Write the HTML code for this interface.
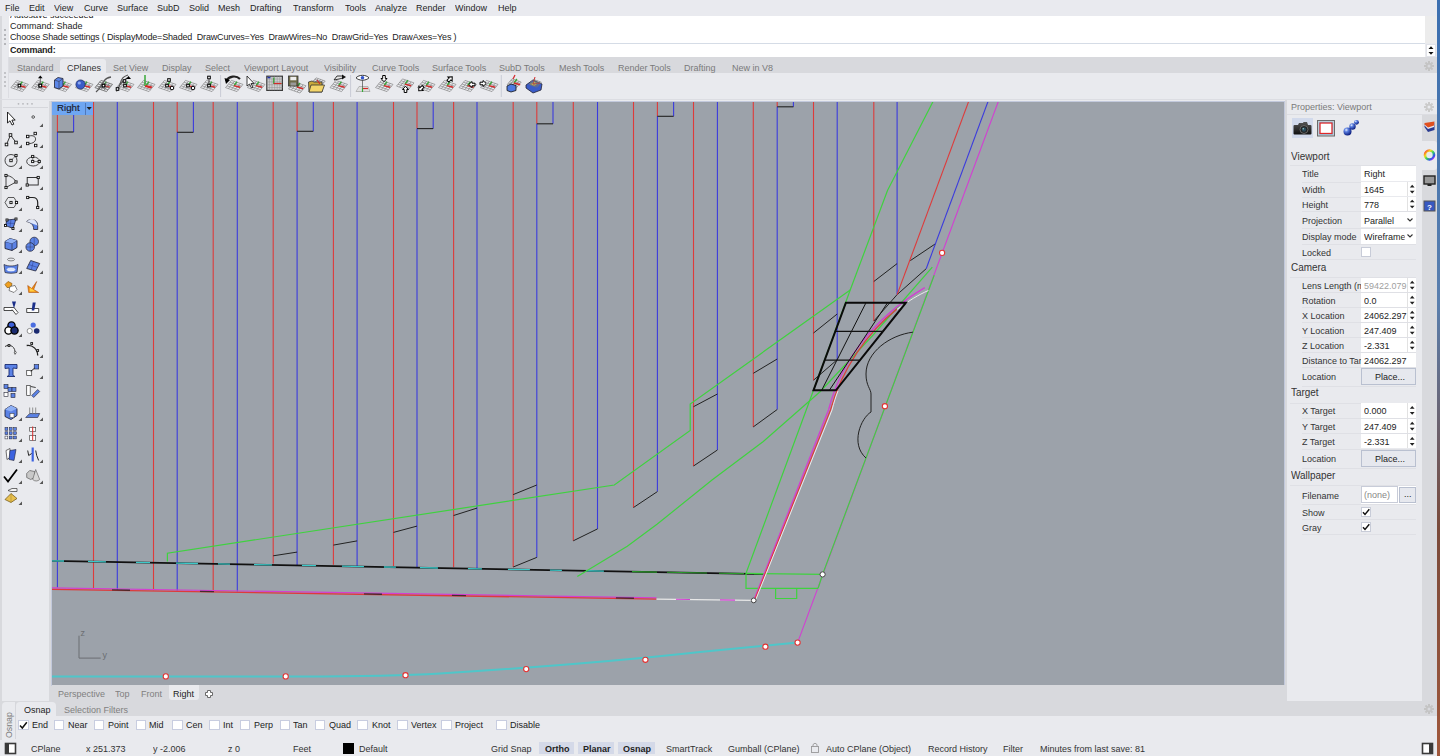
<!DOCTYPE html>
<html><head><meta charset="utf-8">
<style>
*{margin:0;padding:0;box-sizing:border-box}
html,body{width:1440px;height:756px;overflow:hidden;background:#e9eaee;font-family:"Liberation Sans",sans-serif;font-size:9px;color:#222}
.a{position:absolute}
.t{position:absolute;white-space:pre;line-height:1;font-size:9.5px;transform:scaleX(0.947);transform-origin:0 0;margin-top:-0.4px}
#menu .t{top:3.2px;color:#1e1e1e}
</style></head><body>
<!-- menu bar -->
<div id="menu" class="a" style="left:0;top:0;width:1440px;height:16px;background:#e9eaef">
<span class="t" style="left:5px">File</span>
<span class="t" style="left:29px">Edit</span>
<span class="t" style="left:54px">View</span>
<span class="t" style="left:84px">Curve</span>
<span class="t" style="left:117px">Surface</span>
<span class="t" style="left:157px">SubD</span>
<span class="t" style="left:189px">Solid</span>
<span class="t" style="left:218px">Mesh</span>
<span class="t" style="left:250px">Drafting</span>
<span class="t" style="left:293px">Transform</span>
<span class="t" style="left:345px">Tools</span>
<span class="t" style="left:375px">Analyze</span>
<span class="t" style="left:416px">Render</span>
<span class="t" style="left:455px">Window</span>
<span class="t" style="left:498px">Help</span>
</div>
<!-- command area -->
<div class="a" style="left:9px;top:16px;width:1416px;height:27px;background:#fff;overflow:hidden">
<span class="t" style="left:1px;top:-6px">Autosave succeeded</span>
<span class="t" style="left:1px;top:5.7px">Command: Shade</span>
<span class="t" style="left:1px;top:16.7px;letter-spacing:-0.18px">Choose Shade settings ( DisplayMode=Shaded  DrawCurves=Yes  DrawWires=No  DrawGrid=Yes  DrawAxes=Yes )</span>
</div>
<div class="a" style="left:9px;top:43px;width:1416px;height:1px;background:#d5dce6"></div>
<div class="a" style="left:9px;top:44px;width:1416px;height:13px;background:#fff">
<span class="t" style="left:1px;top:1px;font-weight:bold;letter-spacing:-0.2px">Command:</span>
</div>
<div class="a" style="left:1425px;top:16px;width:12px;height:27px;background:#ececec"></div>
<div class="a" style="left:1425px;top:44px;width:12px;height:13px;background:#e9eaee"></div>
<div class="a" style="left:1426px;top:44px;width:10px;height:12.5px;background:#fff;border:1px solid #e0e2e8"></div>
<svg class="a" style="left:1426px;top:44px" width="10" height="13"><path d="M2.5 5 L5 2.2 L7.5 5Z M2.5 8 L5 10.8 L7.5 8Z" fill="#111"/></svg>

<!-- toolbar tabs -->
<div class="a" style="left:9px;top:57px;width:1428px;height:15.5px;background:#d8d9dd"></div>
<div class="a" style="left:2px;top:73px;width:1435px;height:27px;background:#e9eaee"></div>
<div class="a" style="left:60px;top:59px;width:46px;height:14px;background:#e9eaee;border-radius:3px 3px 0 0"></div>
<div id="tabs" style="color:#7a7a7a">
<span class="t" style="left:17px;top:63px">Standard</span>
<span class="t" style="left:67px;top:63px;color:#333">CPlanes</span>
<span class="t" style="left:113px;top:63px">Set View</span>
<span class="t" style="left:162px;top:63px">Display</span>
<span class="t" style="left:205px;top:63px">Select</span>
<span class="t" style="left:244px;top:63px">Viewport Layout</span>
<span class="t" style="left:324px;top:63px">Visibility</span>
<span class="t" style="left:372px;top:63px">Curve Tools</span>
<span class="t" style="left:432px;top:63px">Surface Tools</span>
<span class="t" style="left:499px;top:63px">SubD Tools</span>
<span class="t" style="left:559px;top:63px">Mesh Tools</span>
<span class="t" style="left:618px;top:63px">Render Tools</span>
<span class="t" style="left:684px;top:63px">Drafting</span>
<span class="t" style="left:732px;top:63px">New in V8</span>
</div>
<!-- left toolbar -->
<div class="a" style="left:0;top:16px;width:1.5px;height:724px;background:#d8d9dd"></div>
<div class="a" style="left:2px;top:101px;width:47px;height:600px;background:#e9eaee;border-radius:4px 4px 0 0"></div>
<div class="a" style="left:49px;top:101px;width:3px;height:601px;background:#d8d9dd"></div>
<!-- viewport -->
<div class="a" style="left:51px;top:101px;width:1234px;height:585px;background:#c2c9dc"></div>
<div id="vp" class="a" style="left:52px;top:102px;width:1232px;height:583px;background:#9ca2aa;overflow:hidden"></div>
<svg class="a" style="left:0;top:0" width="1440" height="756" viewBox="0 0 1440 756"><defs><clipPath id="vc"><rect x="52" y="102" width="1232" height="583"/></clipPath></defs><g clip-path="url(#vc)" shape-rendering="auto"><path d="M93.5 101.0 L93.5 589.0" stroke="#dd3b3b" stroke-width="1.1" fill="none" />
<path d="M153.5 101.0 L153.5 590.3" stroke="#dd3b3b" stroke-width="1.1" fill="none" />
<path d="M213.2 101.0 L213.2 591.0" stroke="#dd3b3b" stroke-width="1.1" fill="none" />
<path d="M273.2 101.0 L273.2 563.5" stroke="#dd3b3b" stroke-width="1.1" fill="none" />
<path d="M333.4 101.0 L333.4 564.8" stroke="#dd3b3b" stroke-width="1.1" fill="none" />
<path d="M393.5 101.0 L393.5 566.0" stroke="#dd3b3b" stroke-width="1.1" fill="none" />
<path d="M453.6 101.0 L453.6 567.3" stroke="#dd3b3b" stroke-width="1.1" fill="none" />
<path d="M513.2 101.0 L513.2 567.0" stroke="#dd3b3b" stroke-width="1.1" fill="none" />
<path d="M573.3 101.0 L573.3 540.8" stroke="#dd3b3b" stroke-width="1.1" fill="none" />
<path d="M633.5 101.0 L633.5 507.5" stroke="#dd3b3b" stroke-width="1.1" fill="none" />
<path d="M693.5 101.0 L693.5 466.0" stroke="#dd3b3b" stroke-width="1.1" fill="none" />
<path d="M753.3 101.0 L753.3 426.9" stroke="#dd3b3b" stroke-width="1.1" fill="none" />
<path d="M813.5 101.0 L813.5 380.2" stroke="#dd3b3b" stroke-width="1.1" fill="none" />
<path d="M873.8 101.0 L873.8 321.1" stroke="#dd3b3b" stroke-width="1.1" fill="none" />
<path d="M117.3 101.0 L117.3 589.7" stroke="#3b3bdd" stroke-width="1.1" fill="none" />
<path d="M237.3 101.0 L237.3 591.5" stroke="#3b3bdd" stroke-width="1.1" fill="none" />
<path d="M357.1 101.0 L357.1 566.3" stroke="#3b3bdd" stroke-width="1.1" fill="none" />
<path d="M477.0 101.0 L477.0 568.0" stroke="#3b3bdd" stroke-width="1.1" fill="none" />
<path d="M597.5 101.0 L597.5 528.9" stroke="#3b3bdd" stroke-width="1.1" fill="none" />
<path d="M717.4 101.0 L717.4 450.0" stroke="#3b3bdd" stroke-width="1.1" fill="none" />
<path d="M837.2 101.0 L837.2 359.7" stroke="#3b3bdd" stroke-width="1.1" fill="none" />
<path d="M897.1 101.0 L897.1 294.6" stroke="#3b3bdd" stroke-width="1.1" fill="none" />
<path d="M57.4 101.0 L57.4 132.0" stroke="#dd3b3b" stroke-width="1.1" fill="none" />
<path d="M73.6 101.0 L73.6 132.0" stroke="#3b3bdd" stroke-width="1.1" fill="none" />
<path d="M57.4 132.0 L57.4 587.6" stroke="#3b3bdd" stroke-width="1.1" fill="none" />
<path d="M57.4 132.0 L73.6 132.0" stroke="#222" stroke-width="1.1" fill="none" />
<path d="M177.2 101.0 L177.2 132.3" stroke="#dd3b3b" stroke-width="1.1" fill="none" />
<path d="M193.4 101.0 L193.4 132.3" stroke="#3b3bdd" stroke-width="1.1" fill="none" />
<path d="M177.2 132.3 L177.2 590.6" stroke="#3b3bdd" stroke-width="1.1" fill="none" />
<path d="M177.2 132.3 L193.4 132.3" stroke="#222" stroke-width="1.1" fill="none" />
<path d="M297.1 101.0 L297.1 131.3" stroke="#dd3b3b" stroke-width="1.1" fill="none" />
<path d="M313.3 101.0 L313.3 131.3" stroke="#3b3bdd" stroke-width="1.1" fill="none" />
<path d="M297.1 131.3 L297.1 565.6" stroke="#3b3bdd" stroke-width="1.1" fill="none" />
<path d="M297.1 131.3 L313.3 131.3" stroke="#222" stroke-width="1.1" fill="none" />
<path d="M417.0 101.0 L417.0 128.6" stroke="#dd3b3b" stroke-width="1.1" fill="none" />
<path d="M433.2 101.0 L433.2 128.6" stroke="#3b3bdd" stroke-width="1.1" fill="none" />
<path d="M417.0 128.6 L417.0 567.5" stroke="#3b3bdd" stroke-width="1.1" fill="none" />
<path d="M417.0 128.6 L433.2 128.6" stroke="#222" stroke-width="1.1" fill="none" />
<path d="M536.8 101.0 L536.8 123.8" stroke="#dd3b3b" stroke-width="1.1" fill="none" />
<path d="M553.0 101.0 L553.0 123.8" stroke="#3b3bdd" stroke-width="1.1" fill="none" />
<path d="M536.8 123.8 L536.8 557.4" stroke="#3b3bdd" stroke-width="1.1" fill="none" />
<path d="M536.8 123.8 L553.0 123.8" stroke="#222" stroke-width="1.1" fill="none" />
<path d="M657.4 101.0 L657.4 116.3" stroke="#dd3b3b" stroke-width="1.1" fill="none" />
<path d="M673.6 101.0 L673.6 116.3" stroke="#3b3bdd" stroke-width="1.1" fill="none" />
<path d="M657.4 116.3 L657.4 491.6" stroke="#3b3bdd" stroke-width="1.1" fill="none" />
<path d="M657.4 116.3 L673.6 116.3" stroke="#222" stroke-width="1.1" fill="none" />
<path d="M777.2 101.0 L777.2 106.8" stroke="#dd3b3b" stroke-width="1.1" fill="none" />
<path d="M793.4 101.0 L793.4 106.8" stroke="#3b3bdd" stroke-width="1.1" fill="none" />
<path d="M777.2 106.8 L777.2 409.5" stroke="#3b3bdd" stroke-width="1.1" fill="none" />
<path d="M777.2 106.8 L793.4 106.8" stroke="#222" stroke-width="1.1" fill="none" />
<path d="M513.2 567.0 L536.8 557.4" stroke="#222" stroke-width="1" fill="none" />
<path d="M573.3 540.8 L597.5 528.9" stroke="#222" stroke-width="1" fill="none" />
<path d="M633.5 507.5 L657.4 491.6" stroke="#222" stroke-width="1" fill="none" />
<path d="M693.5 466.0 L717.4 450.0" stroke="#222" stroke-width="1" fill="none" />
<path d="M753.3 426.9 L777.2 409.5" stroke="#222" stroke-width="1" fill="none" />
<path d="M813.5 380.2 L837.2 359.7" stroke="#222" stroke-width="1" fill="none" />
<path d="M873.8 321.1 L897.1 294.6 L926.2 268.7" stroke="#222" stroke-width="1" fill="none" />
<path d="M273.2 555.8 L297.1 552.1" stroke="#222" stroke-width="1" fill="none" />
<path d="M333.4 545.1 L357.1 540.9" stroke="#222" stroke-width="1" fill="none" />
<path d="M393.5 532.4 L417.0 526.1" stroke="#222" stroke-width="1" fill="none" />
<path d="M453.6 515.5 L477.0 508.1" stroke="#222" stroke-width="1" fill="none" />
<path d="M513.2 494.6 L536.8 485.0" stroke="#222" stroke-width="1" fill="none" />
<path d="M693.5 406.7 L717.4 394.0" stroke="#222" stroke-width="1" fill="none" />
<path d="M753.3 373.3 L777.2 359.0" stroke="#222" stroke-width="1" fill="none" />
<path d="M813.5 333.0 L837.2 314.0" stroke="#222" stroke-width="1" fill="none" />
<path d="M873.8 281.5 L897.1 263.6" stroke="#222" stroke-width="1" fill="none" />
<path d="M910.2 260.7 L935.7 243.6" stroke="#222" stroke-width="1" fill="none" />
<path d="M968.8 101.0 L897.1 294.6" stroke="#dd3b3b" stroke-width="1.1" fill="none" />
<path d="M988.2 101.0 L926.2 268.7" stroke="#3b3bdd" stroke-width="1.1" fill="none" />
<path d="M998.5 101.0 L797.6 642.6" stroke="#d23fd2" stroke-width="1.1" fill="none" />
<path d="M52 560.8 L764 574.1" stroke="#111" stroke-width="1.8" fill="none"/>
<path d="M52 560.8 L632 571.6" stroke="#3cc8c8" stroke-width="1.3" fill="none" stroke-dasharray="12 24 18 30 14 26 22 20"/>
<path d="M632 571.6 L764 574.1" stroke="#2a9a2a" stroke-width="1.2" fill="none" stroke-dasharray="25 10 40 12"/>
<path d="M52 587.9 L656.5 597.8" stroke="#d23fd2" stroke-width="1.2" fill="none"/>
<path d="M52 589.3 L656.5 599.1" stroke="#dd3b3b" stroke-width="1.3" fill="none"/>
<path d="M52 589 L656.5 598.6" stroke="#222" stroke-width="1.3" fill="none" stroke-dasharray="0 60 18 70 14 90" opacity="0.8"/>
<path d="M656.5 599.1 L753.7 600.4" stroke="#e8e8e8" stroke-width="1.2" fill="none"/>
<path d="M676 599.3 L690 599.5 M720 599.9 L735 600.1" stroke="#d23fd2" stroke-width="1.1" fill="none"/>
<path d="M167.4 561.4 L167.4 553.2 L614.3 485.0 L690.2 430.5 L690.2 404.0 L850.2 290.0" stroke="#3fd23f" stroke-width="1.2" fill="none" />
<path d="M933.3 101.0 L887.5 190.5 L850.2 290.0 L813.5 390.3 L746.0 573.3 L746.0 588.3 L818.1 588.3" stroke="#3fd23f" stroke-width="1.2" fill="none" />
<path d="M746.0 573.4 L822.6 574.4" stroke="#3fd23f" stroke-width="1.2" fill="none" />
<path d="M775.6 588.3 L775.6 598.5 L796.7 598.5 L796.7 588.3" stroke="#3fd23f" stroke-width="1.2" fill="none" />
<path d="M934.2 275.2 L822.6 574.4 L818.1 588.3" stroke="#3fd23f" stroke-width="1.2" fill="none" />
<path d="M932.3 267.2 L873.1 335.0 L820.0 391.7 L763.3 441.5 L712.0 480.0 L657.0 524.3 L627.3 546.2 L577.3 576.5" stroke="#3fd23f" stroke-width="1.2" fill="none" />
<path d="M753.7 600.4 L828.5 410 C840 365 870 320 924.8 287.6" stroke="#d23fd2" stroke-width="1.3" fill="none"/>
<path d="M754.5 600.4 L830.5 410 C842 368 868 332 897 309" stroke="#dd3b3b" stroke-width="1.2" fill="none"/>
<path d="M755.8 599.5 L832 410 C834 402 836 396 838 391 M897 309.5 C910 300 918 295 928.4 290.5" stroke="#f4f4f4" stroke-width="0.9" fill="none"/>
<path d="M845.9 302.7 L905.9 302.7 L835.9 390.3 L813.5 390.3 Z" stroke="#0a0a0a" stroke-width="2" fill="none" stroke-linejoin="miter"/>
<path d="M835.9 331.4 L883.2 331.4" stroke="#111" stroke-width="1.2" fill="none" />
<path d="M824.7 360.2 L859.4 360.2" stroke="#111" stroke-width="1.2" fill="none" />
<path d="M866.0 302.7 L821.7 390.3" stroke="#111" stroke-width="1" fill="none" />
<path d="M887.6 302.7 L829.3 390.3" stroke="#111" stroke-width="1" fill="none" />
<path d="M912.9 332.2 C890 335 866 352 866 374 C866 386 871 389 871 394 L871 412 C861 418 850 444 866 458" stroke="#222" stroke-width="1" fill="none"/>
<path d="M52 676.6 L300 676.6 C360 676.4 405 675.5 440 673.5 C520 668.5 600 663 700 652 L797.6 642.6" stroke="#4fc6c9" stroke-width="2" fill="none"/>
<path d="M79 635.7 L79 658.1 L100.7 658.1" stroke="#6b6e72" stroke-width="1" fill="none"/>
<text x="80.5" y="636" font-size="9" fill="#6b6e72" font-family="Liberation Sans">z</text>
<text x="102.5" y="657.5" font-size="9" fill="#6b6e72" font-family="Liberation Sans">y</text>
<circle cx="165.8" cy="676.4" r="2.6" fill="#fff" stroke="#e23232" stroke-width="1.1"/>
<circle cx="285.7" cy="676.4" r="2.6" fill="#fff" stroke="#e23232" stroke-width="1.1"/>
<circle cx="405.5" cy="675.2" r="2.6" fill="#fff" stroke="#e23232" stroke-width="1.1"/>
<circle cx="526.2" cy="669.1" r="2.6" fill="#fff" stroke="#e23232" stroke-width="1.1"/>
<circle cx="645.4" cy="659.8" r="2.6" fill="#fff" stroke="#e23232" stroke-width="1.1"/>
<circle cx="765.4" cy="646.7" r="2.6" fill="#fff" stroke="#e23232" stroke-width="1.1"/>
<circle cx="797.6" cy="642.6" r="2.6" fill="#fff" stroke="#e23232" stroke-width="1.1"/>
<circle cx="942.1" cy="252.9" r="2.6" fill="#fff" stroke="#e23232" stroke-width="1.1"/>
<circle cx="884.9" cy="406.2" r="2.6" fill="#fff" stroke="#e23232" stroke-width="1.1"/>
<circle cx="822.6" cy="574.4" r="2.6" fill="#fff" stroke="#444" stroke-width="1"/>
<circle cx="753.7" cy="600.4" r="2.4" fill="#fff" stroke="#444" stroke-width="1"/></g></svg>
<!-- viewport tabs -->
<div class="a" style="left:52px;top:685px;width:1235px;height:17px;background:#d8d9dd"></div>
<!-- right panel -->
<div class="a" style="left:1285px;top:100px;width:2px;height:602px;background:#d8d9dd"></div>
<div class="a" style="left:1287px;top:100px;width:135px;height:600px;background:#e9eaee;border-radius:4px 4px 0 0"></div>
<div class="a" style="left:1422px;top:114px;width:15px;height:588px;background:#d8d9dd"></div><div class="a" style="left:1422px;top:100px;width:15px;height:14px;background:#e9eaee;border-radius:0 4px 0 0"></div>
<!-- osnap -->
<div class="a" style="left:0;top:701px;width:1437px;height:15px;background:#d8d9dd"></div>
<div class="a" style="left:2px;top:702px;width:14px;height:38px;background:#e9eaee;border-radius:4px 0 0 0"></div>
<div class="a" style="left:16px;top:702px;width:40px;height:14px;background:#e9eaee;border-radius:4px 4px 0 0"></div>
<div class="a" style="left:1437px;top:0;width:3px;height:756px;background:linear-gradient(#3b6fb0,#5a7fae 40%,#7a4a3a 70%,#a0583c)"></div>

<svg class="a" style="left:0;top:0" width="600" height="100" viewBox="0 0 600 100"><path d="M10.90 87.60L22.40 91.60M10.90 87.60L16.90 80.40M12.40 85.80L23.90 89.80M13.77 88.60L19.77 81.40M13.90 84.00L25.40 88.00M16.65 89.60L22.65 82.40M15.40 82.20L26.90 86.20M19.52 90.60L25.52 83.40M16.90 80.40L28.40 84.40M22.40 91.60L28.40 84.40" stroke="#777" stroke-width="0.6" fill="none"/><path d="M19.4 85.6L22.299999999999997 81.6" stroke="#38a838" stroke-width="1.4"/><path d="M19.4 85.6L25.599999999999998 87.3" stroke="#d42a2a" stroke-width="1.5"/><rect x="18.099999999999998" y="84.3" width="2.6" height="2.6" fill="#fff" stroke="#000" stroke-width="1"/><path d="M31.80 87.60L43.30 91.60M31.80 87.60L37.80 80.40M33.30 85.80L44.80 89.80M34.67 88.60L40.67 81.40M34.80 84.00L46.30 88.00M37.55 89.60L43.55 82.40M36.30 82.20L47.80 86.20M40.42 90.60L46.42 83.40M37.80 80.40L49.30 84.40M43.30 91.60L49.30 84.40" stroke="#777" stroke-width="0.6" fill="none"/><path d="M40.3 85.6L43.199999999999996 81.6" stroke="#38a838" stroke-width="1.4"/><path d="M40.3 85.6L46.5 87.3" stroke="#d42a2a" stroke-width="1.5"/><rect x="39.0" y="84.3" width="2.6" height="2.6" fill="#fff" stroke="#000" stroke-width="1"/><path d="M40.3 85.6 L40.3 77" stroke="#666" stroke-width="1"/><path d="M38 78.2 L40.3 75.5 L42.6 78.2Z" fill="#000"/><rect x="39" y="84.3" width="2.6" height="2.6" fill="#fff" stroke="#000" stroke-width="1"/><path d="M54.00 87.60L65.50 91.60M54.00 87.60L60.00 80.40M55.50 85.80L67.00 89.80M56.88 88.60L62.88 81.40M57.00 84.00L68.50 88.00M59.75 89.60L65.75 82.40M58.50 82.20L70.00 86.20M62.62 90.60L68.62 83.40M60.00 80.40L71.50 84.40M65.50 91.60L71.50 84.40" stroke="#777" stroke-width="0.6" fill="none"/><path d="M62.5 85.6L65.4 81.6" stroke="#38a838" stroke-width="1.4"/><path d="M62.5 85.6L68.7 87.3" stroke="#d42a2a" stroke-width="1.5"/><path d="M54.5 80 L58 77.5 L63 78.5 L63 86 L59 89 L54.5 87.5Z" fill="#5b86e8" stroke="#223" stroke-width="0.8"/><path d="M54.5 80 L59 81.5 L63 78.5 M59 81.5 L59 89" stroke="#334" stroke-width="0.6" fill="none"/><path d="M75.50 87.60L87.00 91.60M75.50 87.60L81.50 80.40M77.00 85.80L88.50 89.80M78.38 88.60L84.38 81.40M78.50 84.00L90.00 88.00M81.25 89.60L87.25 82.40M80.00 82.20L91.50 86.20M84.12 90.60L90.12 83.40M81.50 80.40L93.00 84.40M87.00 91.60L93.00 84.40" stroke="#777" stroke-width="0.6" fill="none"/><path d="M84 85.6L86.9 81.6" stroke="#38a838" stroke-width="1.4"/><path d="M84 85.6L90.2 87.3" stroke="#d42a2a" stroke-width="1.5"/><circle cx="80.5" cy="84.5" r="4.6" fill="#3a5cc8" stroke="#1a2a60" stroke-width="0.7"/><circle cx="79.3" cy="83" r="1.6" fill="#8aa6f0"/><path d="M95.00 87.60L106.50 91.60M95.00 87.60L101.00 80.40M96.50 85.80L108.00 89.80M97.88 88.60L103.88 81.40M98.00 84.00L109.50 88.00M100.75 89.60L106.75 82.40M99.50 82.20L111.00 86.20M103.62 90.60L109.62 83.40M101.00 80.40L112.50 84.40M106.50 91.60L112.50 84.40" stroke="#777" stroke-width="0.6" fill="none"/><path d="M103.5 85.6L106.4 81.6" stroke="#38a838" stroke-width="1.4"/><path d="M103.5 85.6L109.7 87.3" stroke="#d42a2a" stroke-width="1.5"/><rect x="102.2" y="84.3" width="2.6" height="2.6" fill="#fff" stroke="#000" stroke-width="1"/><path d="M96 92 C101 88 102 84 104 81 S108 77.5 111 77" stroke="#555" stroke-width="1.3" fill="none"/><path d="M95.00 87.60L106.50 91.60M95.00 87.60L101.00 80.40M96.50 85.80L108.00 89.80M97.88 88.60L103.88 81.40M98.00 84.00L109.50 88.00M100.75 89.60L106.75 82.40M99.50 82.20L111.00 86.20M103.62 90.60L109.62 83.40M101.00 80.40L112.50 84.40M106.50 91.60L112.50 84.40" stroke="#777" stroke-width="0.6" fill="none"/><rect x="102.2" y="84.3" width="2.6" height="2.6" fill="#fff" stroke="#000" stroke-width="1"/><path d="M116.50 87.60L128.00 91.60M116.50 87.60L122.50 80.40M118.00 85.80L129.50 89.80M119.38 88.60L125.38 81.40M119.50 84.00L131.00 88.00M122.25 89.60L128.25 82.40M121.00 82.20L132.50 86.20M125.12 90.60L131.12 83.40M122.50 80.40L134.00 84.40M128.00 91.60L134.00 84.40" stroke="#777" stroke-width="0.6" fill="none"/><path d="M125 85.6L127.9 81.6" stroke="#38a838" stroke-width="1.4"/><path d="M125 85.6L131.2 87.3" stroke="#d42a2a" stroke-width="1.5"/><rect x="123.7" y="84.3" width="2.6" height="2.6" fill="#fff" stroke="#000" stroke-width="1"/><path d="M116.5 91.5 C120 87 120 82 122 79 C123 77 125 76 128 75 M120 85 C122 82 124 80 127 78" stroke="#555" stroke-width="1.1" fill="none"/><path d="M126 79 L128.5 76 L131 79Z" fill="#000"/><rect x="116.2" y="87.7" width="2.6" height="2.6" fill="#fff" stroke="#000" stroke-width="1"/><rect x="123.2" y="79.7" width="2.6" height="2.6" fill="#fff" stroke="#000" stroke-width="1"/><path d="M137.50 87.60L149.00 91.60M137.50 87.60L143.50 80.40M139.00 85.80L150.50 89.80M140.38 88.60L146.38 81.40M140.50 84.00L152.00 88.00M143.25 89.60L149.25 82.40M142.00 82.20L153.50 86.20M146.12 90.60L152.12 83.40M143.50 80.40L155.00 84.40M149.00 91.60L155.00 84.40" stroke="#777" stroke-width="0.6" fill="none"/><path d="M146 85.6L148.9 81.6" stroke="#38a838" stroke-width="1.4"/><path d="M146 85.6L152.2 87.3" stroke="#d42a2a" stroke-width="1.5"/><path d="M145 86 L145 75" stroke="#38a838" stroke-width="1.5"/><path d="M145 86 L151 88" stroke="#d42a2a" stroke-width="1.5"/><path d="M158.50 87.60L170.00 91.60M158.50 87.60L164.50 80.40M160.00 85.80L171.50 89.80M161.38 88.60L167.38 81.40M161.50 84.00L173.00 88.00M164.25 89.60L170.25 82.40M163.00 82.20L174.50 86.20M167.12 90.60L173.12 83.40M164.50 80.40L176.00 84.40M170.00 91.60L176.00 84.40" stroke="#777" stroke-width="0.6" fill="none"/><path d="M167 85.6L169.9 81.6" stroke="#38a838" stroke-width="1.4"/><path d="M167 85.6L173.2 87.3" stroke="#d42a2a" stroke-width="1.5"/><rect x="165.7" y="84.3" width="2.6" height="2.6" fill="#fff" stroke="#000" stroke-width="1"/><rect x="167.7" y="78.7" width="2.6" height="2.6" fill="#fff" stroke="#000" stroke-width="1"/><circle cx="172" cy="88" r="1.8" fill="#fff" stroke="#000" stroke-width="1"/><path d="M179.50 87.60L191.00 91.60M179.50 87.60L185.50 80.40M181.00 85.80L192.50 89.80M182.38 88.60L188.38 81.40M182.50 84.00L194.00 88.00M185.25 89.60L191.25 82.40M184.00 82.20L195.50 86.20M188.12 90.60L194.12 83.40M185.50 80.40L197.00 84.40M191.00 91.60L197.00 84.40" stroke="#777" stroke-width="0.6" fill="none"/><path d="M188 85.6L190.9 81.6" stroke="#38a838" stroke-width="1.4"/><path d="M188 85.6L194.2 87.3" stroke="#d42a2a" stroke-width="1.5"/><rect x="186.7" y="84.3" width="2.6" height="2.6" fill="#fff" stroke="#000" stroke-width="1"/><circle cx="193" cy="88" r="1.8" fill="#fff" stroke="#000" stroke-width="1"/><path d="M200.50 87.60L212.00 91.60M200.50 87.60L206.50 80.40M202.00 85.80L213.50 89.80M203.38 88.60L209.38 81.40M203.50 84.00L215.00 88.00M206.25 89.60L212.25 82.40M205.00 82.20L216.50 86.20M209.12 90.60L215.12 83.40M206.50 80.40L218.00 84.40M212.00 91.60L218.00 84.40" stroke="#777" stroke-width="0.6" fill="none"/><path d="M209 85.6L211.9 81.6" stroke="#38a838" stroke-width="1.4"/><path d="M209 85.6L215.2 87.3" stroke="#d42a2a" stroke-width="1.5"/><rect x="207.7" y="84.3" width="2.6" height="2.6" fill="#fff" stroke="#000" stroke-width="1"/><rect x="207.7" y="76.2" width="2.6" height="2.6" fill="#fff" stroke="#000" stroke-width="1"/><path d="M209 79 L209 84" stroke="#444" stroke-width="1"/><path d="M220.6 75 L220.6 97" stroke="#c9ccd6" stroke-width="1"/><path d="M225.50 87.60L237.00 91.60M225.50 87.60L231.50 80.40M227.00 85.80L238.50 89.80M228.38 88.60L234.38 81.40M228.50 84.00L240.00 88.00M231.25 89.60L237.25 82.40M230.00 82.20L241.50 86.20M234.12 90.60L240.12 83.40M231.50 80.40L243.00 84.40M237.00 91.60L243.00 84.40" stroke="#777" stroke-width="0.6" fill="none"/><path d="M234 85.6L236.9 81.6" stroke="#38a838" stroke-width="1.4"/><path d="M234 85.6L240.2 87.3" stroke="#d42a2a" stroke-width="1.5"/><path d="M226 81 C229 76 236 75 240 79" stroke="#222" stroke-width="2.2" fill="none"/><path d="M224.5 78 L226 84 L230 80Z" fill="#000"/><path d="M247.50 87.60L259.00 91.60M247.50 87.60L253.50 80.40M249.00 85.80L260.50 89.80M250.38 88.60L256.38 81.40M250.50 84.00L262.00 88.00M253.25 89.60L259.25 82.40M252.00 82.20L263.50 86.20M256.12 90.60L262.12 83.40M253.50 80.40L265.00 84.40M259.00 91.60L265.00 84.40" stroke="#777" stroke-width="0.6" fill="none"/><path d="M256 85.6L258.9 81.6" stroke="#38a838" stroke-width="1.4"/><path d="M256 85.6L262.2 87.3" stroke="#d42a2a" stroke-width="1.5"/><path d="M247 76 L247 86 L249.5 84 L251.5 88 L253 87.3 L251 83.5 L254 83.5Z" fill="#fff" stroke="#111" stroke-width="0.8"/><rect x="266.8" y="76.2" width="15.6" height="14.2" fill="#cfd0d2" stroke="#3a3a3a" stroke-width="1.2"/><path d="M269.40 76.2 L269.40 90.4 M272.00 76.2 L272.00 90.4 M274.60 76.2 L274.60 90.4 M277.20 76.2 L277.20 90.4 M279.80 76.2 L279.80 90.4 M266.8 79.04 L282.4 79.04 M266.8 81.88 L282.4 81.88 M266.8 84.72 L282.4 84.72 M266.8 87.56 L282.4 87.56 " stroke="#8f8f8f" stroke-width="0.5"/><path d="M273.8 77.5 L273.8 83.5 L281.5 83.5" stroke="#2d9d2d" stroke-width="1.2" fill="none"/><path d="M273.8 83.5 L281.5 83.5" stroke="#d42a2a" stroke-width="1.2"/><rect x="267.5" y="76.8" width="3" height="1.5" fill="#2233aa"/><path d="M288.50 89.00L300.00 93.00M288.50 89.00L294.50 81.80M290.00 87.20L301.50 91.20M291.38 90.00L297.38 82.80M291.50 85.40L303.00 89.40M294.25 91.00L300.25 83.80M293.00 83.60L304.50 87.60M297.12 92.00L303.12 84.80M294.50 81.80L306.00 85.80M300.00 93.00L306.00 85.80" stroke="#777" stroke-width="0.6" fill="none"/><path d="M297 87L299.9 83" stroke="#38a838" stroke-width="1.4"/><path d="M297 87L303.2 88.7" stroke="#d42a2a" stroke-width="1.5"/><rect x="288.5" y="76" width="9.5" height="10" fill="#6d6a48" stroke="#333" stroke-width="0.8"/><rect x="290.3" y="76.8" width="6" height="3.5" fill="#eee"/><rect x="290.5" y="82.5" width="5.5" height="3" fill="#999"/><path d="M311.20 83.60L320.40 86.80M311.20 83.60L316.00 77.84M312.40 82.16L321.60 85.36M313.50 84.40L318.30 78.64M313.60 80.72L322.80 83.92M315.80 85.20L320.60 79.44M314.80 79.28L324.00 82.48M318.10 86.00L322.90 80.24M316.00 77.84L325.20 81.04M320.40 86.80L325.20 81.04" stroke="#777" stroke-width="0.6" fill="none"/><path d="M308.5 82 L312 81 L314 82 L322 82 L322 92 L309 92Z" fill="#c9a93a" stroke="#333" stroke-width="0.8"/><path d="M309 92 L311 85 L324.5 85 L322 92Z" fill="#f3d56a" stroke="#333" stroke-width="0.8"/><path d="M317 80 L320 84" stroke="#d42a2a" stroke-width="1.2"/><path d="M330.00 87.60L341.50 91.60M330.00 87.60L336.00 80.40M331.50 85.80L343.00 89.80M332.88 88.60L338.88 81.40M333.00 84.00L344.50 88.00M335.75 89.60L341.75 82.40M334.50 82.20L346.00 86.20M338.62 90.60L344.62 83.40M336.00 80.40L347.50 84.40M341.50 91.60L347.50 84.40" stroke="#777" stroke-width="0.6" fill="none"/><path d="M338.5 85.6L341.4 81.6" stroke="#38a838" stroke-width="1.4"/><path d="M338.5 85.6L344.7 87.3" stroke="#d42a2a" stroke-width="1.5"/><path d="M334 80 L337 76 L343 76 L343 78 L339 79 Z" fill="#e8e8e8" stroke="#222" stroke-width="0.9"/><path d="M342 74.5 L346 77 L342 79.5Z" fill="#111"/><path d="M350.6 75 L350.6 97" stroke="#c9ccd6" stroke-width="1"/><path d="M356 77.8 C359 74.5 366 74.5 369 77.8 C366 81 359 81 356 77.8Z" fill="#fff" stroke="#222" stroke-width="0.9"/><circle cx="362.5" cy="77.8" r="1.8" fill="#3355cc"/><path d="M356 91.5 L359 86.5 L368 86.5 L370 91.5Z" fill="#e0e0e0" stroke="#999" stroke-width="0.6"/><path d="M362.5 80 L362.5 92" stroke="#333" stroke-width="0.6"/><path d="M362.5 88 L362.5 92" stroke="#38a838" stroke-width="1.2"/><path d="M363 88.5 L368 88.5" stroke="#d42a2a" stroke-width="1.2"/><path d="M375.50 87.60L387.00 91.60M375.50 87.60L381.50 80.40M377.00 85.80L388.50 89.80M378.38 88.60L384.38 81.40M378.50 84.00L390.00 88.00M381.25 89.60L387.25 82.40M380.00 82.20L391.50 86.20M384.12 90.60L390.12 83.40M381.50 80.40L393.00 84.40M387.00 91.60L393.00 84.40" stroke="#777" stroke-width="0.6" fill="none"/><path d="M384 85.6L386.9 81.6" stroke="#38a838" stroke-width="1.4"/><path d="M384 85.6L390.2 87.3" stroke="#d42a2a" stroke-width="1.5"/><g transform="translate(384 78.5) rotate(180)"><path d="M-3 0 L0 -3.2 L3 0 L1.3 0 L1.3 3 L-1.3 3 L-1.3 0Z" fill="#fff" stroke="#000" stroke-width="1"/></g><path d="M396.50 86.10L408.00 90.10M396.50 86.10L402.50 78.90M398.00 84.30L409.50 88.30M399.38 87.10L405.38 79.90M399.50 82.50L411.00 86.50M402.25 88.10L408.25 80.90M401.00 80.70L412.50 84.70M405.12 89.10L411.12 81.90M402.50 78.90L414.00 82.90M408.00 90.10L414.00 82.90" stroke="#777" stroke-width="0.6" fill="none"/><path d="M405 84.1L407.9 80.1" stroke="#38a838" stroke-width="1.4"/><path d="M405 84.1L411.2 85.8" stroke="#d42a2a" stroke-width="1.5"/><g transform="translate(405.5 89.5) rotate(0)"><path d="M-3 0 L0 -3.2 L3 0 L1.3 0 L1.3 3 L-1.3 3 L-1.3 0Z" fill="#fff" stroke="#000" stroke-width="1"/></g><path d="M417.50 87.60L429.00 91.60M417.50 87.60L423.50 80.40M419.00 85.80L430.50 89.80M420.38 88.60L426.38 81.40M420.50 84.00L432.00 88.00M423.25 89.60L429.25 82.40M422.00 82.20L433.50 86.20M426.12 90.60L432.12 83.40M423.50 80.40L435.00 84.40M429.00 91.60L435.00 84.40" stroke="#777" stroke-width="0.6" fill="none"/><path d="M426 85.6L428.9 81.6" stroke="#38a838" stroke-width="1.4"/><path d="M426 85.6L432.2 87.3" stroke="#d42a2a" stroke-width="1.5"/><g transform="translate(421 88.5) rotate(-135)"><path d="M-3 0 L0 -3.2 L3 0 L1.3 0 L1.3 3 L-1.3 3 L-1.3 0Z" fill="#fff" stroke="#000" stroke-width="1"/></g><path d="M438.50 87.60L450.00 91.60M438.50 87.60L444.50 80.40M440.00 85.80L451.50 89.80M441.38 88.60L447.38 81.40M441.50 84.00L453.00 88.00M444.25 89.60L450.25 82.40M443.00 82.20L454.50 86.20M447.12 90.60L453.12 83.40M444.50 80.40L456.00 84.40M450.00 91.60L456.00 84.40" stroke="#777" stroke-width="0.6" fill="none"/><path d="M447 85.6L449.9 81.6" stroke="#38a838" stroke-width="1.4"/><path d="M447 85.6L453.2 87.3" stroke="#d42a2a" stroke-width="1.5"/><g transform="translate(450 79) rotate(45)"><path d="M-3 0 L0 -3.2 L3 0 L1.3 0 L1.3 3 L-1.3 3 L-1.3 0Z" fill="#fff" stroke="#000" stroke-width="1"/></g><path d="M459.00 87.60L470.50 91.60M459.00 87.60L465.00 80.40M460.50 85.80L472.00 89.80M461.88 88.60L467.88 81.40M462.00 84.00L473.50 88.00M464.75 89.60L470.75 82.40M463.50 82.20L475.00 86.20M467.62 90.60L473.62 83.40M465.00 80.40L476.50 84.40M470.50 91.60L476.50 84.40" stroke="#777" stroke-width="0.6" fill="none"/><path d="M467.5 85.6L470.4 81.6" stroke="#38a838" stroke-width="1.4"/><path d="M467.5 85.6L473.7 87.3" stroke="#d42a2a" stroke-width="1.5"/><g transform="translate(472 84.5) rotate(-90)"><path d="M-3 0 L0 -3.2 L3 0 L1.3 0 L1.3 3 L-1.3 3 L-1.3 0Z" fill="#fff" stroke="#000" stroke-width="1"/></g><path d="M480.50 87.60L492.00 91.60M480.50 87.60L486.50 80.40M482.00 85.80L493.50 89.80M483.38 88.60L489.38 81.40M483.50 84.00L495.00 88.00M486.25 89.60L492.25 82.40M485.00 82.20L496.50 86.20M489.12 90.60L495.12 83.40M486.50 80.40L498.00 84.40M492.00 91.60L498.00 84.40" stroke="#777" stroke-width="0.6" fill="none"/><path d="M489 85.6L491.9 81.6" stroke="#38a838" stroke-width="1.4"/><path d="M489 85.6L495.2 87.3" stroke="#d42a2a" stroke-width="1.5"/><g transform="translate(483 83.5) rotate(90)"><path d="M-3 0 L0 -3.2 L3 0 L1.3 0 L1.3 3 L-1.3 3 L-1.3 0Z" fill="#fff" stroke="#000" stroke-width="1"/></g><path d="M501.3 75 L501.3 97" stroke="#c9ccd6" stroke-width="1"/><path d="M507.20 84.60L516.40 87.80M507.20 84.60L512.00 78.84M508.40 83.16L517.60 86.36M509.50 85.40L514.30 79.64M509.60 81.72L518.80 84.92M511.80 86.20L516.60 80.44M510.80 80.28L520.00 83.48M514.10 87.00L518.90 81.24M512.00 78.84L521.20 82.04M516.40 87.80L521.20 82.04" stroke="#777" stroke-width="0.6" fill="none"/><path d="M514 83L516.9 79" stroke="#38a838" stroke-width="1.4"/><path d="M514 83L520.2 84.7" stroke="#d42a2a" stroke-width="1.5"/><path d="M507 86 L511 84 L516 85.5 L516 90.5 L511 92 L507 90.5Z" fill="#4d7ae0" stroke="#111" stroke-width="0.8"/><path d="M513 79 L515 75" stroke="#d42a2a" stroke-width="1.2"/><path d="M526 85 L533 80 L542 84 L541 90 L533 93 L526 88Z" fill="#3a5cc8" stroke="#223" stroke-width="0.8"/><path d="M530 84 L534 81.5 L538 83.5 L534 86Z" fill="#f0c040" stroke="#884" stroke-width="0.5"/><path d="M533 84 L535 77 M533 84 L540 83" stroke="#d42a2a" stroke-width="1"/><path d="M529.05 84.40L537.10 87.20M529.05 84.40L533.25 79.36M530.10 83.14L538.15 85.94M531.06 85.10L535.26 80.06M531.15 81.88L539.20 84.68M533.08 85.80L537.27 80.76M532.20 80.62L540.25 83.42M535.09 86.50L539.29 81.46M533.25 79.36L541.30 82.16M537.10 87.20L541.30 82.16" stroke="#777" stroke-width="0.6" fill="none"/></svg>
<svg class="a" style="left:0;top:0" width="52" height="520" viewBox="0 0 52 520"><path d="M7.5 112.0 L7.5 123.0 L10 120.8 L12 125.0 L13.8 124.2 L11.9 120.1 L15.2 120.1Z" fill="#fff" stroke="#111" stroke-width="0.9"/><circle cx="33.2" cy="117.0" r="1.3" fill="none" stroke="#333" stroke-width="0.8"/><path d="M6.5 144.5 L10.5 135.0 L16 142.5" stroke="#222" stroke-width="0.9" fill="none"/><rect x="5.20" y="143.20" width="2.6" height="2.6" fill="#fff" stroke="#111" stroke-width="0.9"/><rect x="9.20" y="133.70" width="2.6" height="2.6" fill="#fff" stroke="#111" stroke-width="0.9"/><rect x="14.70" y="141.20" width="2.6" height="2.6" fill="#fff" stroke="#111" stroke-width="0.9"/><path d="M27.700000000000003 136.5 C37.7 132.5 38.7 144.5 27.700000000000003 143.5" stroke="#333" stroke-width="0.9" fill="none"/><rect x="26.50" y="135.30" width="2.4" height="2.4" fill="#fff" stroke="#111" stroke-width="0.9"/><rect x="26.50" y="142.30" width="2.4" height="2.4" fill="#fff" stroke="#111" stroke-width="0.9"/><rect x="34.00" y="132.30" width="2.4" height="2.4" fill="#fff" stroke="#111" stroke-width="0.9"/><rect x="34.50" y="144.30" width="2.4" height="2.4" fill="#fff" stroke="#111" stroke-width="0.9"/><circle cx="11" cy="160.5" r="6" fill="none" stroke="#333" stroke-width="0.9"/><path d="M11 160.5 L16 155.5" stroke="#444" stroke-width="0.6"/><rect x="9.80" y="159.30" width="2.4" height="2.4" fill="#fff" stroke="#111" stroke-width="0.9"/><rect x="14.90" y="154.40" width="2.2" height="2.2" fill="#fff" stroke="#111" stroke-width="0.9"/><ellipse cx="33.2" cy="161.5" rx="6.5" ry="4.5" fill="none" stroke="#333" stroke-width="0.9"/><path d="M32.7 161.5 L39.2 161.5 M32.7 161.5 L32.7 156.5" stroke="#444" stroke-width="0.6"/><rect x="31.60" y="160.40" width="2.2" height="2.2" fill="#fff" stroke="#111" stroke-width="0.9"/><rect x="31.60" y="155.40" width="2.2" height="2.2" fill="#fff" stroke="#111" stroke-width="0.9"/><rect x="38.10" y="160.40" width="2.2" height="2.2" fill="#fff" stroke="#111" stroke-width="0.9"/><path d="M6 175.5 C11 175.5 15 179.5 16 182.0 L6 187.5Z" fill="none" stroke="#333" stroke-width="0.9"/><rect x="4.90" y="174.40" width="2.2" height="2.2" fill="#fff" stroke="#111" stroke-width="0.9"/><rect x="14.90" y="180.90" width="2.2" height="2.2" fill="#fff" stroke="#111" stroke-width="0.9"/><rect x="4.90" y="186.40" width="2.2" height="2.2" fill="#fff" stroke="#111" stroke-width="0.9"/><rect x="27.200000000000003" y="177.5" width="11" height="7.5" fill="none" stroke="#222" stroke-width="0.9"/><rect x="37.10" y="176.40" width="2.2" height="2.2" fill="#fff" stroke="#111" stroke-width="0.9"/><rect x="26.10" y="183.90" width="2.2" height="2.2" fill="#fff" stroke="#111" stroke-width="0.9"/><path d="M5 202.5 L8 197.5 L14 197.5 L17 202.5 L14 207.5 L8 207.5Z" fill="none" stroke="#333" stroke-width="0.8"/><rect x="9.90" y="201.40" width="2.2" height="2.2" fill="#fff" stroke="#111" stroke-width="0.9"/><rect x="15.40" y="201.40" width="2.2" height="2.2" fill="#fff" stroke="#111" stroke-width="0.9"/><path d="M27.700000000000003 197.5 L32.7 197.5 C35.7 197.5 37.7 199.5 37.7 202.5 L37.7 207.5" stroke="#222" stroke-width="1.2" fill="none"/><rect x="26.60" y="196.40" width="2.2" height="2.2" fill="#fff" stroke="#111" stroke-width="0.9"/><rect x="36.60" y="206.40" width="2.2" height="2.2" fill="#fff" stroke="#111" stroke-width="0.9"/><path d="M7 220.0 L16 219.0 L13 228.5 L5.5 225.5Z" fill="#5b82e6" stroke="#223" stroke-width="0.8"/><path d="M11 219.5 L10 227.0 M6 223.0 L14.5 223.5" stroke="#2a3a88" stroke-width="0.5"/><rect x="6.00" y="219.00" width="2" height="2" fill="#fff" stroke="#111" stroke-width="0.9"/><rect x="15.00" y="218.00" width="2" height="2" fill="#fff" stroke="#111" stroke-width="0.9"/><rect x="12.00" y="227.50" width="2" height="2" fill="#fff" stroke="#111" stroke-width="0.9"/><rect x="4.50" y="224.50" width="2" height="2" fill="#fff" stroke="#111" stroke-width="0.9"/><path d="M26.700000000000003 221.5 C30.700000000000003 217.5 37.7 219.5 37.7 225.5 L37.7 229.5 L33.7 229.5 C33.7 223.5 29.700000000000003 222.5 26.700000000000003 221.5Z" fill="#5b82e6" stroke="#223" stroke-width="0.8"/><path d="M26.700000000000003 221.5 L29.700000000000003 219.5 C32.7 217.5 35.7 219.5 37.7 225.5" fill="#fff" stroke="none" opacity="0.8"/><path d="M5 241.5 L10 238.5 L17 240.5 L17 247.5 L12 250.5 L5 248.5Z" fill="#5b82e6" stroke="#112" stroke-width="0.8"/><path d="M5 241.5 L12 243.5 L17 240.5 M12 243.5 L12 250.5" stroke="#223" stroke-width="0.6" fill="none"/><path d="M5 241.5 L10 238.5 L17 240.5 L12 243.5Z" fill="#8fb0f5"/><circle cx="34.2" cy="241.5" r="4.3" fill="#5b82e6" stroke="#223" stroke-width="0.7"/><circle cx="30.200000000000003" cy="247.0" r="4.3" fill="#5b82e6" stroke="#223" stroke-width="0.7"/><path d="M26.200000000000003 247.0 L34.2 247.0 M30.200000000000003 243.0 L30.200000000000003 251.0 M34.2 237.5 L34.2 245.5" stroke="#334" stroke-width="0.4"/><ellipse cx="11" cy="259.5" rx="3.5" ry="1.4" fill="none" stroke="#555" stroke-width="0.7"/><path d="M4 264.5 C8 266.5 14 266.5 18 264.5 L17 272.5 C13 273.5 9 273.5 5 272.5Z" fill="#5b82e6" stroke="#223" stroke-width="0.7"/><ellipse cx="11" cy="269.5" rx="4" ry="1.5" fill="#dbe4fb" stroke="#fff" stroke-width="0.6"/><path d="M26.700000000000003 268.5 L30.700000000000003 260.5 L39.7 263.5 L35.7 271.0Z" fill="#5b82e6" stroke="#223" stroke-width="0.8"/><path d="M33.2 262.0 L31.200000000000003 270.0 M28.700000000000003 264.5 L37.7 267.5" stroke="#2a3a88" stroke-width="0.5"/><path d="M5 284.5 L8 281.5 L12 283.5 L11 287.5 L7 287.5Z" fill="#f0a020" stroke="#8a5a10" stroke-width="0.7"/><path d="M10 286.5 L15 285.5 L17 289.5 L14 292.5 L9 290.5Z" fill="#fff" stroke="#555" stroke-width="0.7"/><path d="M27.700000000000003 285.5 L28.700000000000003 292.5 L38.7 292.5 L33.7 289.5 L36.7 281.5 L31.700000000000003 288.5Z" fill="#f08a10" stroke="#a04000" stroke-width="0.5"/><path d="M29.700000000000003 287.5 L29.700000000000003 291.5 L35.7 291.5 L32.7 289.5Z" fill="#ffd040"/><path d="M4 307.5 L14 307.5 L14 310.5 L4 310.5Z" fill="#fff" stroke="#222" stroke-width="0.8"/><path d="M12 301.5 L16 301.5 L14 308.5Z" fill="#1a2f8a"/><path d="M12 309.5 L16 314.5 L18 312.5 L14 307.5" fill="#fff" stroke="#222" stroke-width="0.8"/><path d="M26.700000000000003 308.5 L38.7 308.5 L38.7 312.5 L26.700000000000003 312.5Z" fill="#fff" stroke="#222" stroke-width="0.8"/><path d="M32.7 302.5 L35.7 302.5 L34.2 310.5 L31.700000000000003 310.5Z" fill="#1a2f8a"/><circle cx="11.5" cy="325.5" r="3.6" fill="#3c5fd8" stroke="#000" stroke-width="1.4"/><circle cx="8.5" cy="330.5" r="3.6" fill="#fff" stroke="#000" stroke-width="1.4"/><circle cx="14.5" cy="330.5" r="3.6" fill="#1a2a70" stroke="#000" stroke-width="1.4"/><circle cx="33.2" cy="325.0" r="2.6" fill="#4a6de0"/><circle cx="29.700000000000003" cy="331.0" r="2.6" fill="#fff" stroke="#333" stroke-width="0.5"/><circle cx="36.7" cy="331.0" r="2.8" fill="#1a2a70"/><path d="M5 346.5 C10 343.5 16 346.5 15 354.5" stroke="#222" stroke-width="0.9" fill="none"/><rect x="8.10" y="344.60" width="1.8" height="1.8" fill="#fff" stroke="#111" stroke-width="0.9"/><circle cx="15.3" cy="352.5" r="1" fill="#fff" stroke="#222" stroke-width="0.6"/><path d="M26.700000000000003 345.5 C32.7 344.5 37.7 349.5 37.7 355.5" stroke="#222" stroke-width="1.3" fill="none"/><rect x="30.80" y="342.60" width="1.8" height="1.8" fill="#fff" stroke="#111" stroke-width="0.9"/><rect x="36.80" y="349.60" width="1.8" height="1.8" fill="#fff" stroke="#111" stroke-width="0.9"/><path d="M5 364.5 L17 364.5 L17 368.5 L13 368.0 L13 375.5 L15 376.5 L7 376.5 L9 375.5 L9 368.0 L5 368.5Z" fill="#5b82e6" stroke="#1a2a70" stroke-width="0.9"/><rect x="26.700000000000003" y="370.5" width="5" height="5" fill="#fff" stroke="#333" stroke-width="0.7"/><rect x="34.2" y="364.5" width="4.5" height="4.5" fill="#5b82e6" stroke="#223" stroke-width="0.6"/><path d="M30.700000000000003 371.5 L34.7 368.0" stroke="#111" stroke-width="0.9"/><rect x="4" y="384.5" width="4" height="4" fill="#5b82e6" stroke="#223" stroke-width="0.6"/><rect x="8" y="387.5" width="4" height="4" fill="#5b82e6" stroke="#223" stroke-width="0.6"/><rect x="4" y="392.5" width="4" height="4" fill="#fff" stroke="#223" stroke-width="0.6"/><rect x="12" y="387.5" width="4" height="4" fill="#5b82e6" stroke="#223" stroke-width="0.6"/><rect x="11" y="393.5" width="4" height="4" fill="#5b82e6" stroke="#223" stroke-width="0.6"/><rect x="26.700000000000003" y="385.5" width="3.5" height="10" fill="#fff" stroke="#333" stroke-width="0.7"/><path d="M31.700000000000003 395.5 L37.7 389.5 L39.7 391.5 L33.7 397.5Z" fill="#5b82e6" stroke="#223" stroke-width="0.6"/><path d="M30.700000000000003 386.5 L35.7 387.5" stroke="#111" stroke-width="0.8"/><path d="M5 409.5 L11 405.5 L17 408.5 L17 415.5 L11 419.5 L5 416.5Z" fill="#5b82e6" stroke="#112" stroke-width="0.8"/><path d="M5 409.5 L11 405.5 L17 408.5 L11 411.5Z" fill="#8fb0f5"/><rect x="10" y="413.5" width="4" height="4" fill="#fff" stroke="#333" stroke-width="0.5"/><path d="M25.700000000000003 417.5 L29.700000000000003 413.5 L39.7 413.5 L37.7 417.5Z" fill="#5b82e6" stroke="#223" stroke-width="0.6"/><path d="M29.700000000000003 414.5 L29.700000000000003 407.5 M32.7 414.5 L32.7 407.5 M35.7 414.5 L35.7 407.5" stroke="#777" stroke-width="0.8"/><rect x="5.0" y="427.5" width="2.8" height="2.8" fill="#5b82e6" stroke="#223" stroke-width="0.5"/><rect x="5.0" y="431.8" width="2.8" height="2.8" fill="#5b82e6" stroke="#223" stroke-width="0.5"/><rect x="5.0" y="436.1" width="2.8" height="2.8" fill="#fff" stroke="#223" stroke-width="0.5"/><rect x="9.3" y="427.5" width="2.8" height="2.8" fill="#5b82e6" stroke="#223" stroke-width="0.5"/><rect x="9.3" y="431.8" width="2.8" height="2.8" fill="#5b82e6" stroke="#223" stroke-width="0.5"/><rect x="9.3" y="436.1" width="2.8" height="2.8" fill="#5b82e6" stroke="#223" stroke-width="0.5"/><rect x="13.6" y="427.5" width="2.8" height="2.8" fill="#5b82e6" stroke="#223" stroke-width="0.5"/><rect x="13.6" y="431.8" width="2.8" height="2.8" fill="#5b82e6" stroke="#223" stroke-width="0.5"/><rect x="13.6" y="436.1" width="2.8" height="2.8" fill="#5b82e6" stroke="#223" stroke-width="0.5"/><rect x="29.700000000000003" y="427.5" width="6" height="4" fill="#fff" stroke="#333" stroke-width="0.6"/><rect x="29.700000000000003" y="435.5" width="6" height="5" fill="#fff" stroke="#333" stroke-width="0.6"/><path d="M32.7 426.5 L32.7 440.5" stroke="#d42a2a" stroke-width="1"/><path d="M6 450.5 L10 448.5 L10 457.5 L7 459.5Z" fill="#fff" stroke="#333" stroke-width="0.7"/><path d="M10 450.5 L16 449.5 L14 460.5 L9 459.5Z" fill="#3c62e0" stroke="#223" stroke-width="0.6"/><path d="M32.7 447.5 L32.7 461.5" stroke="#3c62e0" stroke-width="2.2"/><path d="M27.700000000000003 450.5 L28.700000000000003 455.5 L31.700000000000003 453.5 M35.7 450.5 L36.7 455.5 L38.7 460.5" stroke="#111" stroke-width="0.9" fill="none"/><path d="M4 476.5 L8 481.5 L17 469.5" stroke="#000" stroke-width="1.8" fill="none"/><path d="M26.700000000000003 473.5 L29.700000000000003 470.5 L34.7 471.5 L34.7 477.5 L30.700000000000003 479.5 L26.700000000000003 477.5Z" fill="#c8c8c8" stroke="#444" stroke-width="0.6"/><path d="M35.7 469.5 L39.7 479.5 C37.7 481.5 34.7 481.5 32.7 479.5Z" fill="#d8d8d8" stroke="#555" stroke-width="0.6"/><path d="M5 499.5 L11 493.5 L17 498.5 L11 502.5Z" fill="#e8c050" stroke="#6a5010" stroke-width="0.7"/><path d="M11 493.5 L11 502.5" stroke="#a08020" stroke-width="0.5"/><path d="M8 490.5 L12 488.5 L17 488.5 L17 491.5 L11 491.5Z" fill="#f4f4f4" stroke="#333" stroke-width="0.7"/><path d="M43.0 123.5 L43.0 127.0 L39.5 127.0Z" fill="#555"/><path d="M22.0 144.5 L22.0 148.0 L18.5 148.0Z" fill="#555"/><path d="M43.0 144.5 L43.0 148.0 L39.5 148.0Z" fill="#555"/><path d="M22.0 165.5 L22.0 169.0 L18.5 169.0Z" fill="#555"/><path d="M43.0 165.5 L43.0 169.0 L39.5 169.0Z" fill="#555"/><path d="M22.0 186.5 L22.0 190.0 L18.5 190.0Z" fill="#555"/><path d="M43.0 186.5 L43.0 190.0 L39.5 190.0Z" fill="#555"/><path d="M22.0 207.5 L22.0 211.0 L18.5 211.0Z" fill="#555"/><path d="M43.0 207.5 L43.0 211.0 L39.5 211.0Z" fill="#555"/><path d="M22.0 228.5 L22.0 232.0 L18.5 232.0Z" fill="#555"/><path d="M43.0 228.5 L43.0 232.0 L39.5 232.0Z" fill="#555"/><path d="M22.0 249.5 L22.0 253.0 L18.5 253.0Z" fill="#555"/><path d="M43.0 249.5 L43.0 253.0 L39.5 253.0Z" fill="#555"/><path d="M22.0 270.5 L22.0 274.0 L18.5 274.0Z" fill="#555"/><path d="M43.0 270.5 L43.0 274.0 L39.5 274.0Z" fill="#555"/><path d="M22.0 291.5 L22.0 295.0 L18.5 295.0Z" fill="#555"/><path d="M22.0 333.5 L22.0 337.0 L18.5 337.0Z" fill="#555"/><path d="M43.0 354.5 L43.0 358.0 L39.5 358.0Z" fill="#555"/><path d="M43.0 375.5 L43.0 379.0 L39.5 379.0Z" fill="#555"/><path d="M22.0 417.5 L22.0 421.0 L18.5 421.0Z" fill="#555"/><path d="M43.0 417.5 L43.0 421.0 L39.5 421.0Z" fill="#555"/><path d="M22.0 438.5 L22.0 442.0 L18.5 442.0Z" fill="#555"/><path d="M43.0 438.5 L43.0 442.0 L39.5 442.0Z" fill="#555"/><path d="M22.0 459.5 L22.0 463.0 L18.5 463.0Z" fill="#555"/><path d="M43.0 459.5 L43.0 463.0 L39.5 463.0Z" fill="#555"/><path d="M22.0 480.5 L22.0 484.0 L18.5 484.0Z" fill="#555"/><path d="M43.0 480.5 L43.0 484.0 L39.5 484.0Z" fill="#555"/><path d="M22.0 501.5 L22.0 505.0 L18.5 505.0Z" fill="#555"/><circle cx="18.5" cy="103.8" r="0.9" fill="#b5b6ba"/><circle cx="23.0" cy="103.8" r="0.9" fill="#b5b6ba"/><circle cx="27.5" cy="103.8" r="0.9" fill="#b5b6ba"/><circle cx="32.0" cy="103.8" r="0.9" fill="#b5b6ba"/><path d="M3 107.5 L48 107.5" stroke="#d6d7dc" stroke-width="1"/></svg>
<!-- toolbar grip -->
<div class="a" style="left:4px;top:71.5px;width:2px;height:2px;background:#b5b6ba;border-radius:1px"></div>
<div class="a" style="left:4px;top:76px;width:2px;height:2px;background:#b5b6ba;border-radius:1px"></div>
<div class="a" style="left:4px;top:80.5px;width:2px;height:2px;background:#b5b6ba;border-radius:1px"></div>
<div class="a" style="left:4px;top:85px;width:2px;height:2px;background:#b5b6ba;border-radius:1px"></div>
<div class="a" style="left:8px;top:57px;width:1px;height:41px;background:#dcdde2"></div>
<div class="a" style="left:4px;top:29px;width:2px;height:2px;background:#b5b6ba"></div>
<div class="a" style="left:4px;top:33.5px;width:2px;height:2px;background:#b5b6ba"></div>
<div class="a" style="left:4px;top:38px;width:2px;height:2px;background:#b5b6ba"></div>
<div class="a" style="left:4px;top:42.5px;width:2px;height:2px;background:#b5b6ba"></div>
<!-- viewport label -->
<div class="a" style="left:52px;top:102px;width:41px;height:13px;background:#6ea6f2"></div>
<span class="t" style="left:57.2px;top:104.2px;color:#1a1a2a;font-size:9px;transform:scaleX(1.08);-webkit-text-stroke:0.15px #1a1a2a">Right</span>
<div class="a" style="left:84.5px;top:103px;width:1px;height:11.5px;background:#5078b8"></div>
<svg class="a" style="left:86px;top:105px" width="7" height="7"><path d="M0.6 2 L5.8 2 L3.2 5Z" fill="#222"/></svg>
<!-- viewport tabs text -->
<div class="a" style="left:169px;top:685px;width:30px;height:15px;background:#e9eaee;border-radius:0 0 3px 3px"></div>
<span class="t" style="left:58px;top:689px;color:#808080">Perspective</span>
<span class="t" style="left:115px;top:689px;color:#808080">Top</span>
<span class="t" style="left:141px;top:689px;color:#808080">Front</span>
<span class="t" style="left:173px;top:689px;color:#222">Right</span>
<svg class="a" style="left:205px;top:690px" width="8" height="8"><path d="M2.5 0.5 H5.5 V2.5 H7.5 V5.5 H5.5 V7.5 H2.5 V5.5 H0.5 V2.5 H2.5 Z" fill="#fff" stroke="#6a6a6a" stroke-width="1"/></svg>
<!-- right panel content -->
<div id="props">
<span class="t" style="left:1291px;top:102px;color:#7a7a7a">Properties: Viewport</span>
<div class="a" style="left:1287px;top:114px;width:150px;height:1px;background:#dcdde2"></div>
<svg class="a" style="left:1423px;top:101px" width="12" height="12"><g transform="translate(6 6)" fill="#cbcbcb"><circle r="3.2"/><g id="teeth"><rect x="-1" y="-5" width="2" height="10"/><rect x="-5" y="-1" width="10" height="2"/><rect x="-1" y="-5" width="2" height="10" transform="rotate(45)"/><rect x="-5" y="-1" width="10" height="2" transform="rotate(45)"/></g><circle r="1.5" fill="#e9eaee"/></g></svg>
<div class="a" style="left:1292px;top:118px;width:21px;height:20px;background:#d2daec"></div>
<svg class="a" style="left:1292px;top:118px" width="70" height="20">
<defs><radialGradient id="bg1" cx="0.35" cy="0.3" r="0.7"><stop offset="0" stop-color="#e8f0ff"/><stop offset="0.35" stop-color="#5a7ee0"/><stop offset="1" stop-color="#0c1f80"/></radialGradient><linearGradient id="cam" x1="0" y1="0" x2="0" y2="1"><stop offset="0" stop-color="#555"/><stop offset="1" stop-color="#111"/></linearGradient></defs>
<path d="M2.5 7 L6 7 L7 5 L11 5 L11.5 4 L15 4 L16 7 L18.5 7 Q19.5 7 19.5 8 L19.5 15.5 Q19.5 16.5 18.5 16.5 L2.5 16.5 Q1.5 16.5 1.5 15.5 L1.5 8 Q1.5 7 2.5 7Z" fill="url(#cam)"/>
<circle cx="12" cy="11.5" r="4" fill="#222" stroke="#777" stroke-width="0.8"/><circle cx="12" cy="11.5" r="2.2" fill="#2a4a5a"/><circle cx="11.3" cy="10.8" r="0.8" fill="#9cc"/>
<rect x="25.5" y="2.5" width="17" height="15.5" fill="#c8ccd2" stroke="#6a6a6a" stroke-width="1"/>
<rect x="26.8" y="3.8" width="14.4" height="12.9" fill="#7fd0f4"/>
<rect x="28" y="5" width="12" height="10.5" fill="#fff" stroke="#e02828" stroke-width="1.3"/>
<circle cx="55.5" cy="13.5" r="4" fill="url(#bg1)"/>
<circle cx="60.5" cy="8.5" r="3.2" fill="url(#bg1)"/>
<circle cx="64.5" cy="4.3" r="2.4" fill="url(#bg1)"/>
</svg>
<!-- side tabs -->
<div class="a" style="left:1422px;top:141px;width:15px;height:29px;background:#e9eaee;border-radius:0 3px 3px 0"></div>
<svg class="a" style="left:1422px;top:118px" width="15" height="105">
<path d="M2.5 6 L12.5 5 L12.5 12 L6 14 L2.5 9Z" fill="#2a3a90"/><path d="M2.5 6 L12.5 5 L12 9 L6 11 L2.5 7.5Z" fill="#e8e8f0"/><path d="M2.5 5 L12.5 3.5 L12 7.5 L6 9.5 L2.5 6.5Z" fill="#e05020"/>
<circle cx="7.5" cy="37" r="4.5" fill="none" stroke="url(#cw)" stroke-width="2.6"/>
<defs><linearGradient id="cw" x1="0" y1="0" x2="1" y2="1"><stop offset="0" stop-color="#ff3030"/><stop offset="0.3" stop-color="#f0e020"/><stop offset="0.55" stop-color="#30d060"/><stop offset="0.8" stop-color="#3050f0"/><stop offset="1" stop-color="#e030e0"/></linearGradient></defs>
<rect x="2" y="58" width="11" height="8" fill="#999" stroke="#222" stroke-width="1.4"/><rect x="5.5" y="66" width="4" height="2" fill="#222"/>
<rect x="2" y="83" width="11" height="10" fill="#3858c0" stroke="#555" stroke-width="1"/><text x="7.5" y="91.5" font-size="8" fill="#fff" text-anchor="middle" font-family="Liberation Sans" font-weight="bold">?</text>
</svg>
<span class="t" style="left:1290.5px;top:151px;font-size:10.5px;color:#333">Viewport</span><div class="a" style="left:1290px;top:165.3px;width:126px;height:1px;background:#dfe0e5"></div><span class="t" style="left:1302px;top:169.8px;color:#333">Title</span><div class="a" style="left:1360.5px;top:165.8px;width:55px;height:15.199999999999989px;background:#fff"></div><span class="t" style="left:1363.5px;top:169.8px;color:#222;width:52px;overflow:hidden">Right</span><div class="a" style="left:1302px;top:181.5px;width:114px;height:1px;background:#dfe0e5"></div><span class="t" style="left:1302px;top:185.4px;color:#333">Width</span><div class="a" style="left:1360.5px;top:182.0px;width:55px;height:14.0px;background:#fff"></div><span class="t" style="left:1363.5px;top:185.4px;color:#222;width:52px;overflow:hidden">1645</span><div class="a" style="left:1407px;top:182.0px;width:1px;height:14.0px;background:#e2e2e2"></div><svg class="a" style="left:1408px;top:182.0px" width="8" height="14.0"><path d="M1.8 5.4 L4.2 2.8 L6.6 5.4Z M1.8 8.8 L4.2 11.4 L6.6 8.8Z" fill="#222"/></svg><div class="a" style="left:1302px;top:196.5px;width:114px;height:1px;background:#dfe0e5"></div><span class="t" style="left:1302px;top:200.3px;color:#333">Height</span><div class="a" style="left:1360.5px;top:197.0px;width:55px;height:13.800000000000011px;background:#fff"></div><span class="t" style="left:1363.5px;top:200.3px;color:#222;width:52px;overflow:hidden">778</span><div class="a" style="left:1407px;top:197.0px;width:1px;height:13.800000000000011px;background:#e2e2e2"></div><svg class="a" style="left:1408px;top:197.0px" width="8" height="13.800000000000011"><path d="M1.8 5.300000000000006 L4.2 2.7000000000000055 L6.6 5.300000000000006Z M1.8 8.700000000000006 L4.2 11.300000000000006 L6.6 8.700000000000006Z" fill="#222"/></svg><div class="a" style="left:1302px;top:211.3px;width:114px;height:1px;background:#dfe0e5"></div><span class="t" style="left:1302px;top:216.1px;color:#333">Projection</span><div class="a" style="left:1360.5px;top:211.8px;width:55px;height:15.699999999999989px;background:#fff"></div><span class="t" style="left:1363.5px;top:216.1px;color:#222;width:43px;overflow:hidden">Parallel</span><svg class="a" style="left:1406px;top:216.7px" width="8" height="6"><path d="M1.5 1.5 L4 4 L6.5 1.5" stroke="#333" stroke-width="1.1" fill="none"/></svg><div class="a" style="left:1302px;top:228px;width:114px;height:1px;background:#dfe0e5"></div><span class="t" style="left:1302px;top:232.4px;color:#333">Display mode</span><div class="a" style="left:1360.5px;top:228.5px;width:55px;height:15px;background:#fff"></div><span class="t" style="left:1363.5px;top:232.4px;color:#222;width:43px;overflow:hidden">Wireframe</span><svg class="a" style="left:1406px;top:233.0px" width="8" height="6"><path d="M1.5 1.5 L4 4 L6.5 1.5" stroke="#333" stroke-width="1.1" fill="none"/></svg><div class="a" style="left:1302px;top:244px;width:114px;height:1px;background:#dfe0e5"></div><span class="t" style="left:1302px;top:248.1px;color:#333">Locked</span><div class="a" style="left:1361px;top:246.7px;width:10px;height:10px;background:#fff;border:1px solid #c8ccd8"></div><div class="a" style="left:1302px;top:259.3px;width:114px;height:1px;background:#dfe0e5"></div><span class="t" style="left:1290.5px;top:262px;font-size:10.5px;color:#333">Camera</span><div class="a" style="left:1290px;top:277px;width:126px;height:1px;background:#dfe0e5"></div><span class="t" style="left:1302px;top:280.9px;color:#333">Lens Length (mm)</span><div class="a" style="left:1360.5px;top:277.5px;width:55px;height:14px;background:#fff"></div><span class="t" style="left:1363.5px;top:280.9px;color:#a0a0a0;width:52px;overflow:hidden">59422.079</span><div class="a" style="left:1407px;top:277.5px;width:1px;height:14px;background:#e2e2e2"></div><svg class="a" style="left:1408px;top:277.5px" width="8" height="14"><path d="M1.8 5.4 L4.2 2.8 L6.6 5.4Z M1.8 8.8 L4.2 11.4 L6.6 8.8Z" fill="#222"/></svg><div class="a" style="left:1302px;top:292px;width:114px;height:1px;background:#dfe0e5"></div><span class="t" style="left:1302px;top:295.9px;color:#333">Rotation</span><div class="a" style="left:1360.5px;top:292.5px;width:55px;height:14px;background:#fff"></div><span class="t" style="left:1363.5px;top:295.9px;color:#222;width:52px;overflow:hidden">0.0</span><div class="a" style="left:1407px;top:292.5px;width:1px;height:14px;background:#e2e2e2"></div><svg class="a" style="left:1408px;top:292.5px" width="8" height="14"><path d="M1.8 5.4 L4.2 2.8 L6.6 5.4Z M1.8 8.8 L4.2 11.4 L6.6 8.8Z" fill="#222"/></svg><div class="a" style="left:1302px;top:307px;width:114px;height:1px;background:#dfe0e5"></div><span class="t" style="left:1302px;top:310.9px;color:#333">X Location</span><div class="a" style="left:1360.5px;top:307.5px;width:55px;height:14px;background:#fff"></div><span class="t" style="left:1363.5px;top:310.9px;color:#222;width:52px;overflow:hidden">24062.297</span><div class="a" style="left:1407px;top:307.5px;width:1px;height:14px;background:#e2e2e2"></div><svg class="a" style="left:1408px;top:307.5px" width="8" height="14"><path d="M1.8 5.4 L4.2 2.8 L6.6 5.4Z M1.8 8.8 L4.2 11.4 L6.6 8.8Z" fill="#222"/></svg><div class="a" style="left:1302px;top:322px;width:114px;height:1px;background:#dfe0e5"></div><span class="t" style="left:1302px;top:325.9px;color:#333">Y Location</span><div class="a" style="left:1360.5px;top:322.5px;width:55px;height:14px;background:#fff"></div><span class="t" style="left:1363.5px;top:325.9px;color:#222;width:52px;overflow:hidden">247.409</span><div class="a" style="left:1407px;top:322.5px;width:1px;height:14px;background:#e2e2e2"></div><svg class="a" style="left:1408px;top:322.5px" width="8" height="14"><path d="M1.8 5.4 L4.2 2.8 L6.6 5.4Z M1.8 8.8 L4.2 11.4 L6.6 8.8Z" fill="#222"/></svg><div class="a" style="left:1302px;top:337px;width:114px;height:1px;background:#dfe0e5"></div><span class="t" style="left:1302px;top:340.9px;color:#333">Z Location</span><div class="a" style="left:1360.5px;top:337.5px;width:55px;height:14px;background:#fff"></div><span class="t" style="left:1363.5px;top:340.9px;color:#222;width:52px;overflow:hidden">-2.331</span><div class="a" style="left:1407px;top:337.5px;width:1px;height:14px;background:#e2e2e2"></div><svg class="a" style="left:1408px;top:337.5px" width="8" height="14"><path d="M1.8 5.4 L4.2 2.8 L6.6 5.4Z M1.8 8.8 L4.2 11.4 L6.6 8.8Z" fill="#222"/></svg><div class="a" style="left:1302px;top:352px;width:114px;height:1px;background:#dfe0e5"></div><span class="t" style="left:1302px;top:355.9px;color:#333">Distance to Target</span><div class="a" style="left:1360.5px;top:352.5px;width:55px;height:14px;background:#fff"></div><span class="t" style="left:1363.5px;top:355.9px;color:#222;width:52px;overflow:hidden">24062.297</span><div class="a" style="left:1302px;top:367px;width:114px;height:1px;background:#dfe0e5"></div><span class="t" style="left:1302px;top:372.6px;color:#333">Location</span><div class="a" style="left:1360.5px;top:368px;width:55px;height:16.5px;background:#e6e8ee;border:1px solid #b9c0d0"></div><span class="t" style="left:1374.5px;top:372.6px;color:#222">Place...</span><div class="a" style="left:1302px;top:385.5px;width:114px;height:1px;background:#dfe0e5"></div><span class="t" style="left:1290.5px;top:387.5px;font-size:10.5px;color:#333">Target</span><div class="a" style="left:1290px;top:402.5px;width:126px;height:1px;background:#dfe0e5"></div><span class="t" style="left:1302px;top:406.6px;color:#333">X Target</span><div class="a" style="left:1360.5px;top:403.0px;width:55px;height:14.5px;background:#fff"></div><span class="t" style="left:1363.5px;top:406.6px;color:#222;width:52px;overflow:hidden">0.000</span><div class="a" style="left:1407px;top:403.0px;width:1px;height:14.5px;background:#e2e2e2"></div><svg class="a" style="left:1408px;top:403.0px" width="8" height="14.5"><path d="M1.8 5.65 L4.2 3.05 L6.6 5.65Z M1.8 9.05 L4.2 11.65 L6.6 9.05Z" fill="#222"/></svg><div class="a" style="left:1302px;top:418px;width:114px;height:1px;background:#dfe0e5"></div><span class="t" style="left:1302px;top:421.9px;color:#333">Y Target</span><div class="a" style="left:1360.5px;top:418.5px;width:55px;height:14px;background:#fff"></div><span class="t" style="left:1363.5px;top:421.9px;color:#222;width:52px;overflow:hidden">247.409</span><div class="a" style="left:1407px;top:418.5px;width:1px;height:14px;background:#e2e2e2"></div><svg class="a" style="left:1408px;top:418.5px" width="8" height="14"><path d="M1.8 5.4 L4.2 2.8 L6.6 5.4Z M1.8 8.8 L4.2 11.4 L6.6 8.8Z" fill="#222"/></svg><div class="a" style="left:1302px;top:433px;width:114px;height:1px;background:#dfe0e5"></div><span class="t" style="left:1302px;top:437.1px;color:#333">Z Target</span><div class="a" style="left:1360.5px;top:433.5px;width:55px;height:14.5px;background:#fff"></div><span class="t" style="left:1363.5px;top:437.1px;color:#222;width:52px;overflow:hidden">-2.331</span><div class="a" style="left:1407px;top:433.5px;width:1px;height:14.5px;background:#e2e2e2"></div><svg class="a" style="left:1408px;top:433.5px" width="8" height="14.5"><path d="M1.8 5.65 L4.2 3.05 L6.6 5.65Z M1.8 9.05 L4.2 11.65 L6.6 9.05Z" fill="#222"/></svg><div class="a" style="left:1302px;top:448.5px;width:114px;height:1px;background:#dfe0e5"></div><span class="t" style="left:1302px;top:454.4px;color:#333">Location</span><div class="a" style="left:1360.5px;top:449.5px;width:55px;height:17.0px;background:#e6e8ee;border:1px solid #b9c0d0"></div><span class="t" style="left:1374.5px;top:454.4px;color:#222">Place...</span><div class="a" style="left:1302px;top:467.5px;width:114px;height:1px;background:#dfe0e5"></div><span class="t" style="left:1290.5px;top:470px;font-size:10.5px;color:#333">Wallpaper</span><div class="a" style="left:1290px;top:485px;width:126px;height:1px;background:#dfe0e5"></div><span class="t" style="left:1302px;top:490.9px;color:#333">Filename</span><div class="a" style="left:1360.5px;top:485.5px;width:55px;height:18px;background:#fff"></div><span class="t" style="left:1363.5px;top:490.9px;color:#a0a0a0;width:52px;overflow:hidden">(none)</span><div class="a" style="left:1360.5px;top:486px;width:37px;height:17px;background:#fff;border:1px solid #c8ccd8"></div><span class="t" style="left:1363.5px;top:490px;color:#888">(none)</span><div class="a" style="left:1398.5px;top:486.5px;width:17px;height:16.5px;background:#e6e8ee;border:1px solid #b9c0d0"></div><span class="t" style="left:1403.5px;top:489px;color:#222">...</span><div class="a" style="left:1302px;top:504.3px;width:114px;height:1px;background:#dfe0e5"></div><span class="t" style="left:1302px;top:508.1px;color:#333">Show</span><div class="a" style="left:1361px;top:506.8px;width:10px;height:10px;background:#fff;border:1px solid #c8ccd8"></div><svg class="a" style="left:1361px;top:506.8px" width="10" height="10"><path d="M2 5.2 L4 7.5 L8.3 2.2" stroke="#111" stroke-width="1.4" fill="none"/></svg><div class="a" style="left:1302px;top:519.2px;width:114px;height:1px;background:#dfe0e5"></div><span class="t" style="left:1302px;top:523.2px;color:#333">Gray</span><div class="a" style="left:1361px;top:521.8px;width:10px;height:10px;background:#fff;border:1px solid #c8ccd8"></div><svg class="a" style="left:1361px;top:521.8px" width="10" height="10"><path d="M2 5.2 L4 7.5 L8.3 2.2" stroke="#111" stroke-width="1.4" fill="none"/></svg><div class="a" style="left:1302px;top:534.4px;width:114px;height:1px;background:#dfe0e5"></div>
</div>
<!-- osnap -->
<div class="a" style="left:15px;top:702px;width:1px;height:37px;background:#d6d7dc"></div>
<span class="t" style="left:4px;top:738.5px;color:#7a7a7a;transform:rotate(-90deg) scaleX(0.92);transform-origin:0 0">Osnap</span>
<span class="t" style="left:24px;top:705px;color:#222">Osnap</span>
<span class="t" style="left:64px;top:705px;color:#808080">Selection Filters</span>
<svg class="a" style="left:1423px;top:703px" width="12" height="12"><g transform="translate(6 6)" fill="#c4c4c4"><circle r="3"/><rect x="-1" y="-5" width="2" height="10"/><rect x="-5" y="-1" width="10" height="2"/><rect x="-1" y="-5" width="2" height="10" transform="rotate(45)"/><rect x="-5" y="-1" width="10" height="2" transform="rotate(45)"/><circle r="1.5" fill="#d8d9dd"/></g></svg>
<div class="a" style="left:18.1px;top:719.8px;width:10.5px;height:10.5px;background:#fff;border:1px solid #c8cde0"></div><svg class="a" style="left:18.1px;top:719.8px" width="11" height="11"><path d="M2 5.5 L4.3 8 L8.8 2.3" stroke="#111" stroke-width="1.5" fill="none"/></svg><span class="t" style="left:32.2px;top:720px;color:#222">End</span><div class="a" style="left:53.7px;top:719.8px;width:10.5px;height:10.5px;background:#fff;border:1px solid #c8cde0"></div><span class="t" style="left:68.4px;top:720px;color:#222">Near</span><div class="a" style="left:93.5px;top:719.8px;width:10.5px;height:10.5px;background:#fff;border:1px solid #c8cde0"></div><span class="t" style="left:107.6px;top:720px;color:#222">Point</span><div class="a" style="left:135.5px;top:719.8px;width:10.5px;height:10.5px;background:#fff;border:1px solid #c8cde0"></div><span class="t" style="left:149.0px;top:720px;color:#222">Mid</span><div class="a" style="left:172.1px;top:719.8px;width:10.5px;height:10.5px;background:#fff;border:1px solid #c8cde0"></div><span class="t" style="left:185.5px;top:720px;color:#222">Cen</span><div class="a" style="left:209.4px;top:719.8px;width:10.5px;height:10.5px;background:#fff;border:1px solid #c8cde0"></div><span class="t" style="left:223.4px;top:720px;color:#222">Int</span><div class="a" style="left:239.9px;top:719.8px;width:10.5px;height:10.5px;background:#fff;border:1px solid #c8cde0"></div><span class="t" style="left:254.2px;top:720px;color:#222">Perp</span><div class="a" style="left:279.5px;top:719.8px;width:10.5px;height:10.5px;background:#fff;border:1px solid #c8cde0"></div><span class="t" style="left:293.3px;top:720px;color:#222">Tan</span><div class="a" style="left:314.9px;top:719.8px;width:10.5px;height:10.5px;background:#fff;border:1px solid #c8cde0"></div><span class="t" style="left:328.8px;top:720px;color:#222">Quad</span><div class="a" style="left:357.4px;top:719.8px;width:10.5px;height:10.5px;background:#fff;border:1px solid #c8cde0"></div><span class="t" style="left:371.7px;top:720px;color:#222">Knot</span><div class="a" style="left:397.4px;top:719.8px;width:10.5px;height:10.5px;background:#fff;border:1px solid #c8cde0"></div><span class="t" style="left:411.2px;top:720px;color:#222">Vertex</span><div class="a" style="left:441.2px;top:719.8px;width:10.5px;height:10.5px;background:#fff;border:1px solid #c8cde0"></div><span class="t" style="left:455.4px;top:720px;color:#222">Project</span><div class="a" style="left:496.2px;top:719.8px;width:10.5px;height:10.5px;background:#fff;border:1px solid #c8cde0"></div><span class="t" style="left:510.4px;top:720px;color:#222">Disable</span>
<!-- status -->
<svg class="a" style="left:4px;top:742px" width="13" height="13"><rect x="1.5" y="1.5" width="10" height="10" fill="#fff" stroke="#3a3a3a" stroke-width="1.6"/><rect x="1.5" y="1.5" width="3.5" height="10" fill="#3a3a3a"/></svg><svg class="a" style="left:1421px;top:742px" width="13" height="13"><rect x="1.5" y="1.5" width="10" height="10" fill="#fff" stroke="#3a3a3a" stroke-width="1.6"/><rect x="8" y="1.5" width="3.5" height="10" fill="#3a3a3a"/></svg><div class="a" style="left:539.2px;top:741.7px;width:34.8px;height:12.5px;background:#d4d9e8"></div><div class="a" style="left:577.9px;top:741.7px;width:36.3px;height:12.5px;background:#d4d9e8"></div><div class="a" style="left:617.5px;top:741.7px;width:37.5px;height:12.5px;background:#d4d9e8"></div><span class="t" style="left:31px;top:744px;color:#333;">CPlane</span><span class="t" style="left:86.3px;top:744px;color:#333;">x 251.373</span><span class="t" style="left:153.4px;top:744px;color:#333;">y -2.006</span><span class="t" style="left:228px;top:744px;color:#333;">z 0</span><span class="t" style="left:293.3px;top:744px;color:#333;">Feet</span><span class="t" style="left:359.2px;top:744px;color:#333;">Default</span><span class="t" style="left:491.2px;top:744px;color:#333;">Grid Snap</span><span class="t" style="left:544.6px;top:744px;color:#222;font-weight:bold;">Ortho</span><span class="t" style="left:583.3px;top:744px;color:#222;font-weight:bold;">Planar</span><span class="t" style="left:623.3px;top:744px;color:#222;font-weight:bold;">Osnap</span><span class="t" style="left:665.8px;top:744px;color:#333;">SmartTrack</span><span class="t" style="left:727.9px;top:744px;color:#333;">Gumball (CPlane)</span><span class="t" style="left:825.8px;top:744px;color:#333;">Auto CPlane (Object)</span><span class="t" style="left:927.6px;top:744px;color:#333;">Record History</span><span class="t" style="left:1003px;top:744px;color:#333;">Filter</span><span class="t" style="left:1040px;top:744px;color:#333;">Minutes from last save: 81</span><div class="a" style="left:342.5px;top:742.5px;width:11.5px;height:11.5px;background:#000"></div><svg class="a" style="left:810px;top:741px" width="10" height="13"><rect x="1.5" y="5.5" width="7" height="6" fill="none" stroke="#999" stroke-width="0.9"/><path d="M3 5.5 L3 3.5 Q5 0.8 7 3.5 L7 5.5" fill="none" stroke="#999" stroke-width="0.9"/></svg>
<svg class="a" style="left:1423px;top:60px" width="12" height="12"><g transform="translate(6 6)" fill="#c4c4c4"><circle r="3"/><rect x="-1" y="-5" width="2" height="10"/><rect x="-5" y="-1" width="10" height="2"/><rect x="-1" y="-5" width="2" height="10" transform="rotate(45)"/><rect x="-5" y="-1" width="10" height="2" transform="rotate(45)"/><circle r="1.5" fill="#d8d9dd"/></g></svg>
<div class="a" style="left:0;top:99px;width:1437px;height:1px;background:#dcdde2"></div>
</body></html>
